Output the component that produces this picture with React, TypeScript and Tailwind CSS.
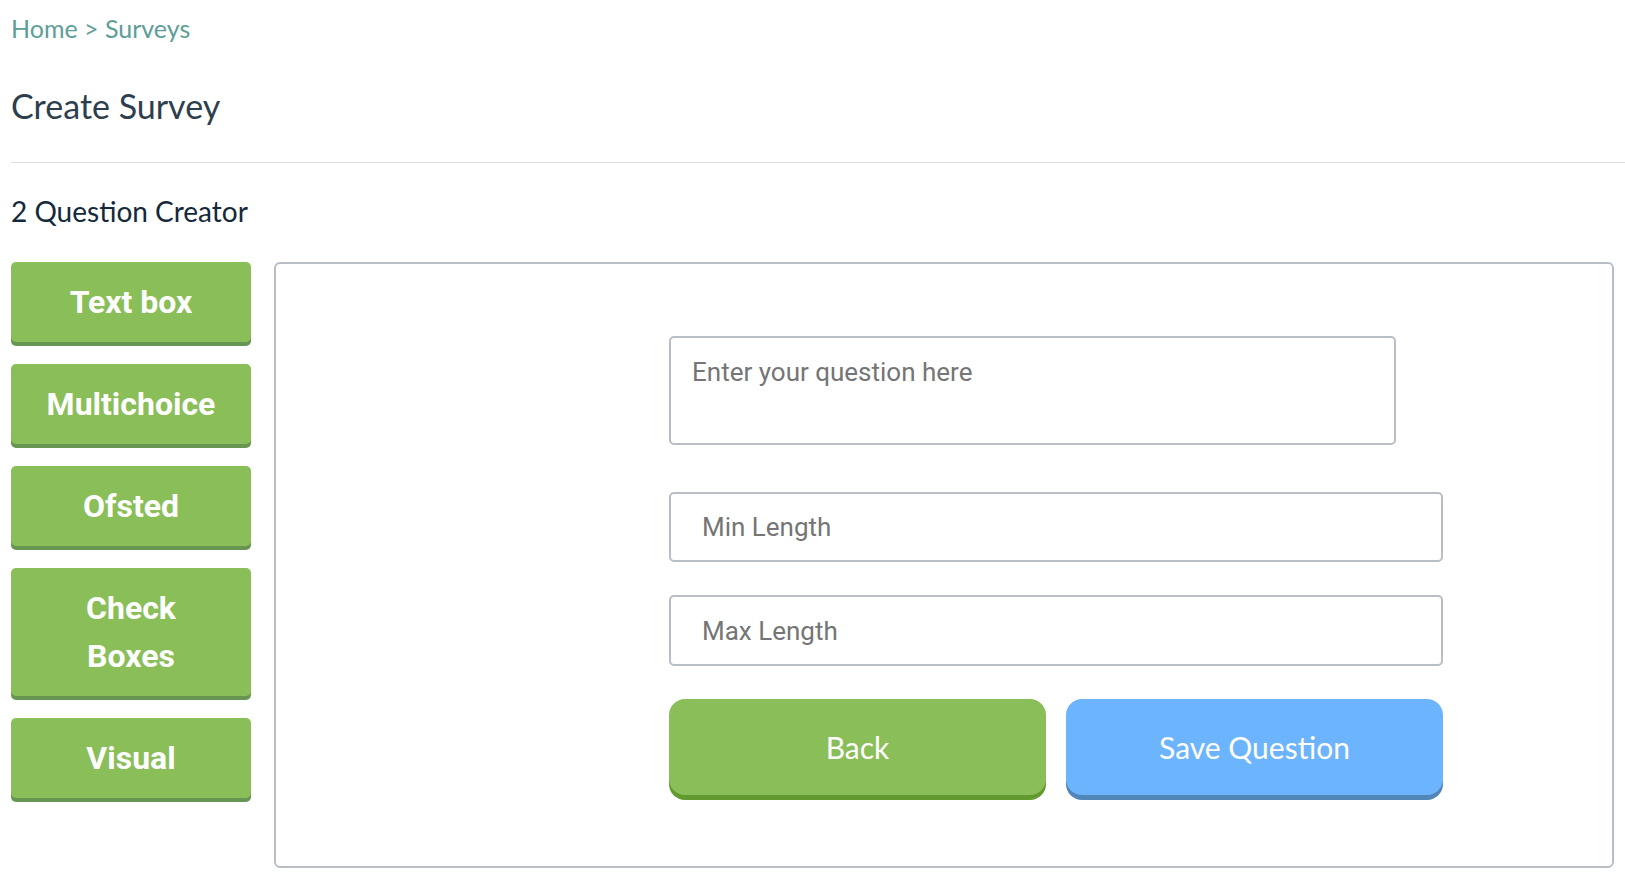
import { useState } from "react";

const TYPES = ["Text box", "Multichoice", "Ofsted", "Check Boxes", "Visual"];

function TypeButton({ label }: { label: string }) {
  return (
    <button
      type="button"
      className="w-full rounded-[5px] bg-[#8abe58] px-2 py-4 text-center font-['Roboto',sans-serif] text-[32px] leading-[48px] font-bold text-white shadow-[0_4px_0_#699552]"
    >
      {label === "Check Boxes" ? (
        <>
          Check
          <br />
          Boxes
        </>
      ) : (
        label
      )}
    </button>
  );
}

export default function App() {
  const [question, setQuestion] = useState("");
  const [minLen, setMinLen] = useState("");
  const [maxLen, setMaxLen] = useState("");

  return (
    <div className="min-h-screen bg-white pr-[11px] pl-[11px] font-['Lato',sans-serif]">
      <nav className="pt-[10px] text-[25px] leading-[36px] text-[#5d9e98]">
        <a href="#">Home</a> &gt; <a href="#">Surveys</a>
      </nav>
      <h1 className="mt-[41px] text-[34px] leading-[38px] text-[#2d3e4e]">Create Survey</h1>
      <hr className="mt-[37px] -mr-[11px] border-t border-[#dddddd]" />
      <h2 className="mt-[31px] text-[28px] leading-[34px] text-[#14283a]">2 Question Creator</h2>

      <div className="mt-[34px] flex items-start gap-[23px]">
        <div className="flex w-[240px] shrink-0 flex-col gap-[22px]">
          {TYPES.map((t) => (
            <TypeButton key={t} label={t} />
          ))}
        </div>

        <div className="h-[606px] flex-1 rounded-[6px] border-2 border-[#b8bdc6] pt-[72px] pl-[393px]">
          <div className="flex w-[774px] flex-col">
            <textarea
              value={question}
              onChange={(e) => setQuestion(e.target.value)}
              placeholder="Enter your question here"
              className="h-[109px] w-[727px] resize-none rounded-[5px] border-2 border-[#b8bdc6] px-[21px] pt-[19px] font-['Roboto',sans-serif] text-[26px] leading-[30px] text-[#555] outline-none placeholder:text-[#757575]"
            />
            <input
              value={minLen}
              onChange={(e) => setMinLen(e.target.value)}
              placeholder="Min Length"
              className="mt-[47px] h-[70px] w-full rounded-[5px] border-2 border-[#b8bdc6] px-[31px] font-['Roboto',sans-serif] text-[26px] text-[#555] outline-none placeholder:text-[#757575]"
            />
            <input
              value={maxLen}
              onChange={(e) => setMaxLen(e.target.value)}
              placeholder="Max Length"
              className="mt-[33px] h-[71px] w-full rounded-[5px] border-2 border-[#b8bdc6] px-[31px] font-['Roboto',sans-serif] text-[26px] text-[#555] outline-none placeholder:text-[#757575]"
            />
            <div className="mt-[33px] grid grid-cols-2 gap-[20px]">
              <button
                type="button"
                className="h-[96px] rounded-[16px] bg-[#8abe58] text-[30px] text-white shadow-[0_5px_0_#639a30]"
              >
                Back
              </button>
              <button
                type="button"
                className="h-[96px] rounded-[16px] bg-[#6db4fe] text-[30px] text-white shadow-[0_5px_0_#5086b8]"
              >
                Save Question
              </button>
            </div>
          </div>
        </div>
      </div>
    </div>
  );
}
